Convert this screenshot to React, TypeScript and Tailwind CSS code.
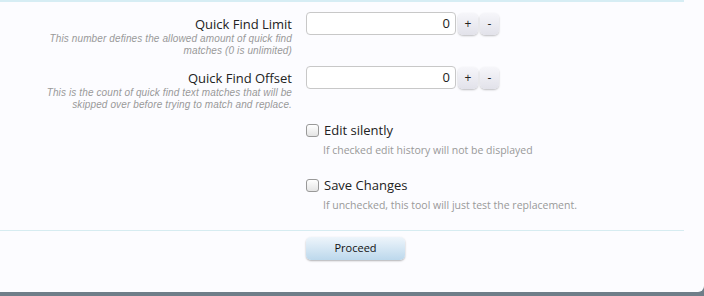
const font = { fontFamily: '"Open Sans", sans-serif' };
const hintFont = { fontFamily: '"Liberation Sans", Arial, sans-serif' };

function SpinRow({ label, hint }: { label: string; hint: string[] }) {
  return (
    <div className="flex items-start">
      <div className="w-[292px] shrink-0 text-right">
        <div className="text-[13px] leading-[18px] text-[#222] pt-[3px]">{label}</div>
        <div style={hintFont} className="text-[10px] italic leading-[11.5px] text-[#999] tracking-[0.12px]">
          {hint.map((h) => (
            <div key={h}>{h}</div>
          ))}
        </div>
      </div>
      <div className="ml-[14px] flex items-center gap-[2px]">
        <div className="w-[150px] h-[23px] rounded-[4px] border border-[#c8c8c8] bg-white flex items-center justify-end pr-[5px] text-[13px] text-[#222]">
          0
        </div>
        <button className="w-[20px] h-[22px] rounded-[5px] bg-gradient-to-b from-[#f6f6fa] to-[#e2e2ea] shadow-[0_1px_2px_rgba(0,0,0,0.25)] text-[12px] text-[#222] leading-none">
          +
        </button>
        <button className="w-[19px] h-[22px] rounded-[5px] bg-gradient-to-b from-[#f6f6fa] to-[#e2e2ea] shadow-[0_1px_2px_rgba(0,0,0,0.25)] text-[12px] text-[#222] leading-none">
          -
        </button>
      </div>
    </div>
  );
}

function CheckRow({ label, hint }: { label: string; hint: string }) {
  return (
    <div className="pl-[306px]">
      <label className="flex items-center gap-[5px]">
        <span className="w-[13px] h-[13px] rounded-[3px] border border-[#999] bg-gradient-to-b from-[#fff] to-[#e4e4e4]" />
        <span className="text-[13px] text-[#222] leading-[16px]">{label}</span>
      </label>
      <div className="pl-[17px] mt-[6px] text-[10.5px] text-[#999] leading-[13px]">{hint}</div>
    </div>
  );
}

export default function App() {
  return (
    <div style={font} className="w-[704px] h-[296px] bg-[#6f7e89] overflow-hidden">
      <div className="h-[292px] bg-[#fcfcff] rounded-br-[6px] flex flex-col">
        <div className="h-[2px] w-[684px] bg-[#d6edf4]" />
        <div className="pt-[10px]">
          <SpinRow
            label="Quick Find Limit"
            hint={["This number defines the allowed amount of quick find", "matches (0 is unlimited)"]}
          />
          <div className="mt-[10px]">
            <SpinRow
              label="Quick Find Offset"
              hint={["This is the count of quick find text matches that will be", "skipped over before trying to match and replace."]}
            />
          </div>
          <div className="mt-[12px] flex flex-col gap-[20px]">
            <CheckRow label="Edit silently" hint="If checked edit history will not be displayed" />
            <CheckRow label="Save Changes" hint="If unchecked, this tool will just test the replacement." />
          </div>
        </div>
        <div className="mt-auto mb-[32px]">
          <div className="h-[1px] w-[684px] bg-[#d6ecf1]" />
          <div className="pl-[306px] pt-[3px]">
            <button className="w-[99px] h-[23px] rounded-[5px] bg-gradient-to-b from-[#eef5fb] to-[#bcd8ec] shadow-[0_1px_2px_rgba(0,0,0,0.3)] text-[11px] text-[#111]">
              Proceed
            </button>
          </div>
        </div>
      </div>
    </div>
  );
}
